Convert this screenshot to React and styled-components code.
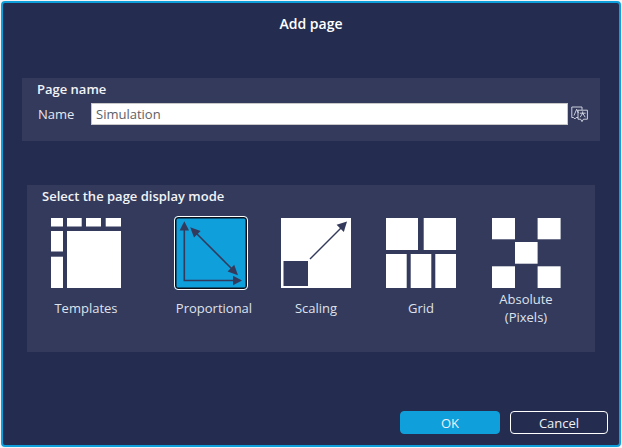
import React from 'react';
import styled, { createGlobalStyle } from 'styled-components';

const GlobalStyle = createGlobalStyle`
  html, body {
    margin: 0;
    background: #f4f5f7;
  }
  body {
    font-family: "Open Sans", "Noto Sans", sans-serif;
  }
`

const Page = styled.div`
  width: 622px;
  height: 448px;
  padding: 1px;
  box-sizing: border-box;
`
const Dialog = styled.div`
  display: flex;
  flex-direction: column;
  height: 100%;
  box-sizing: border-box;
  border: 2px solid #0f9fdb;
  border-radius: 4px;
  background: #242d4f;
  color: #fff;
`
const Title = styled.h1`
  height: 75px;
  margin: 0;
  padding-top: 11px;
  box-sizing: border-box;
  font-size: 14px;
  line-height: 20px;
  font-weight: 600;
  text-align: center;
`
const Panel = styled.section`
  margin: 0 ${p => p.$inset}px;
  background: #333a5c;
`
const NamePanel = styled(Panel)`
  height: 63px;
  padding: 2px 0 0 15px;
  box-sizing: border-box;
`
const ModePanel = styled(Panel)`
  height: 167px;
  margin-top: 44px;
  padding-top: 2px;
  box-sizing: border-box;
`
const PanelTitle = styled.h2`
  margin: 0;
  font-size: 13px;
  line-height: 18px;
  font-weight: 600;
  color: #f2f3f7;
`
const ModeTitle = styled(PanelTitle)`
  padding-left: 15px;
`
const NameRow = styled.div`
  display: flex;
  align-items: center;
  margin-top: 5px;
`
const NameLabel = styled.label`
  width: 54px;
  padding-left: 1px;
  box-sizing: border-box;
  font-size: 13px;
  color: #e6e8f0;
`
const NameInput = styled.input`
  width: 477px;
  height: 22px;
  padding: 0 4px;
  box-sizing: border-box;
  border: 1px solid #c8c8c8;
  border-radius: 0;
  outline: none;
  background: #fff;
  font-family: inherit;
  font-size: 13px;
  color: #5d6068;
`
const TranslateButton = styled.span`
  display: flex;
  margin-left: 3px;
`
const Options = styled.div`
  display: flex;
  margin-top: 11px;
`
const Option = styled.div`
  width: 100px;
  margin-left: ${p => p.$offset}px;
  flex: none;
  display: flex;
  flex-direction: column;
  align-items: center;
`
const IconSlot = styled.div`
  height: 74px;
  display: flex;
  align-items: center;
  margin-right: ${p => p.$shift || 0}px;
`
const SelectedBox = styled.div`
  width: 74px;
  height: 74px;
  box-sizing: border-box;
  border: 1px solid #fff;
  border-radius: 4px;
  background: #0f9fdb;
  box-shadow: inset 0 0 0 1.5px #0b0f1a;
`
const OptionLabel = styled.div`
  height: 36px;
  display: flex;
  align-items: center;
  text-align: center;
  font-size: 13px;
  line-height: 18px;
  color: #dfe2ec;
`
const Footer = styled.footer`
  display: flex;
  justify-content: flex-end;
  gap: 10px;
  margin-top: auto;
  padding: 0 11px 11px 0;
`
const Button = styled.button`
  width: ${p => p.$width}px;
  height: 23px;
  padding: 0;
  box-sizing: border-box;
  border: 1px solid ${p => (p.$primary ? '#0f9fdb' : '#fff')};
  border-radius: 4px;
  background: ${p => (p.$primary ? '#0f9fdb' : 'transparent')};
  color: #eef1f6;
  font-family: inherit;
  font-size: 13px;
`

const Sheet = ({ children, width = 70 }) => (
  <svg width={width} height="70" viewBox={`0 0 ${width} 70`} fill="#fff">{children}</svg>
)

const TemplatesIcon = () => (
  <Sheet>
    <rect x="0" y="0" width="12" height="8.5" />
    <rect x="16" y="0" width="14.7" height="8.5" />
    <rect x="35" y="0" width="15" height="8.5" />
    <rect x="54.7" y="0" width="15.3" height="8.5" />
    <rect x="0" y="13" width="12" height="20.5" />
    <rect x="0" y="38.7" width="12" height="31.3" />
    <rect x="16" y="13" width="54" height="57" />
  </Sheet>
)

const ProportionalIcon = () => (
  <SelectedBox>
    <svg width="72" height="72" viewBox="0 0 72 72" fill="#333a5c" stroke="none" style={{ display: 'block' }}>
      <path d="M9.3 12V63.5H60" fill="none" stroke="#333a5c" strokeWidth="1.6" />
      <path d="M9.3 4.2L14 13.5H4.6z" />
      <path d="M67 63.5L58 58.8V68.2z" />
      <path d="M20 15L58 53" stroke="#333a5c" strokeWidth="1.6" />
      <path d="M15.2 10.2L25.6 14L19 20.6z" />
      <path d="M63 58.2L52.6 54.4L59.2 47.8z" />
    </svg>
  </SelectedBox>
)

const ScalingIcon = () => (
  <Sheet>
    <rect x="0" y="0" width="70" height="70" />
    <rect x="2.5" y="43" width="24.5" height="25" fill="#333a5c" />
    <path d="M29 41L61 9" stroke="#333a5c" strokeWidth="1.4" />
    <path d="M66 3.5L62.8 14L55.6 6.8z" fill="#333a5c" />
  </Sheet>
)

const GridIcon = () => (
  <Sheet>
    <rect x="0" y="0" width="32" height="32" />
    <rect x="37.7" y="0" width="32.3" height="32" />
    <rect x="0" y="36" width="20.7" height="34" />
    <rect x="24.7" y="36" width="20.6" height="34" />
    <rect x="49.3" y="36" width="20.7" height="34" />
  </Sheet>
)

const AbsoluteIcon = () => (
  <Sheet width={69}>
    <rect x="0" y="0" width="23" height="21.3" />
    <rect x="45.6" y="0" width="23" height="21.3" />
    <rect x="23" y="24" width="22.6" height="21.7" />
    <rect x="0" y="48.3" width="23" height="21.7" />
    <rect x="45.6" y="48.3" width="23" height="21.7" />
  </Sheet>
)

const TranslateIcon = () => (
  <svg width="17" height="17" viewBox="0 0 17 17" fill="none" stroke="#dfe2ec" strokeWidth="0.9">
    <path d="M7 11.5H5.2L3.8 13L2.6 11.5H0.8V1H11V3.8" />
    <path d="M3 9.5L5.7 3.2L7.4 7" />
    <path d="M7 4.2H16.4V13.2H12.4L11 15.6L9.6 13.2H7z" />
    <path d="M8.8 7.2H14.6M11.7 5.4V7.2M11.7 7.2L9.2 11.2M11.7 7.2L14.2 11.2" />
  </svg>
)

export default function App() {
  return (
    <Page>
      <GlobalStyle />
      <Dialog>
        <Title>Add page</Title>
        <NamePanel $inset={19}>
          <PanelTitle>Page name</PanelTitle>
          <NameRow>
            <NameLabel htmlFor="page-name">Name</NameLabel>
            <NameInput id="page-name" defaultValue="Simulation" />
            <TranslateButton><TranslateIcon /></TranslateButton>
          </NameRow>
        </NamePanel>
        <ModePanel $inset={24}>
          <ModeTitle>Select the page display mode</ModeTitle>
          <Options>
            <Option $offset={9}>
              <IconSlot><TemplatesIcon /></IconSlot>
              <OptionLabel>Templates</OptionLabel>
            </Option>
            <Option $offset={28}>
              <IconSlot $shift={6}><ProportionalIcon /></IconSlot>
              <OptionLabel>Proportional</OptionLabel>
            </Option>
            <Option $offset={2}>
              <IconSlot><ScalingIcon /></IconSlot>
              <OptionLabel>Scaling</OptionLabel>
            </Option>
            <Option $offset={5}>
              <IconSlot><GridIcon /></IconSlot>
              <OptionLabel>Grid</OptionLabel>
            </Option>
            <Option $offset={5}>
              <IconSlot><AbsoluteIcon /></IconSlot>
              <OptionLabel>Absolute<br />(Pixels)</OptionLabel>
            </Option>
          </Options>
        </ModePanel>
        <Footer>
          <Button $primary $width={100}>OK</Button>
          <Button $width={98}>Cancel</Button>
        </Footer>
      </Dialog>
    </Page>
  );
}
